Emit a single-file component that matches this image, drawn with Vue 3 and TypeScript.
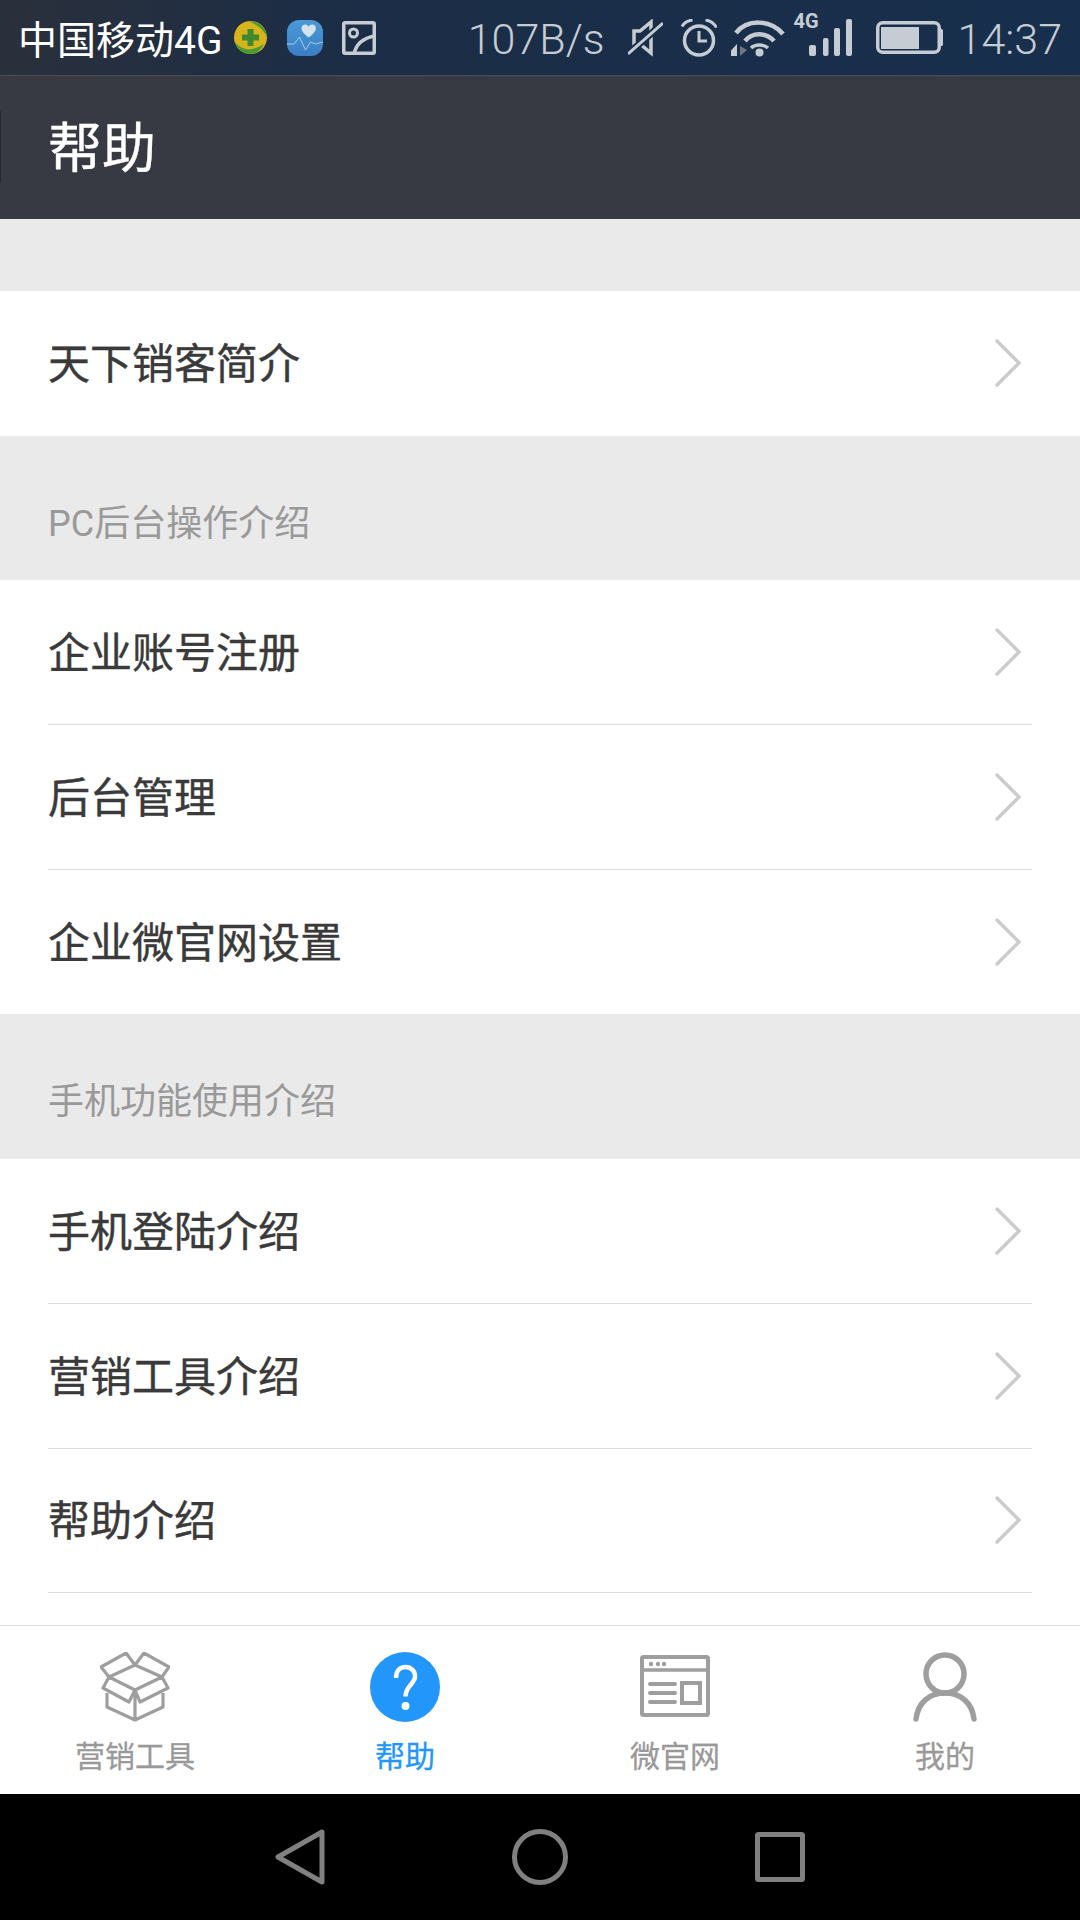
<script setup lang="ts">
interface Section {
  title: string
  items: string[]
  lastLine?: boolean
}

const sections: Section[] = [
  { title: '', items: ['天下销客简介'] },
  { title: 'PC后台操作介绍', items: ['企业账号注册', '后台管理', '企业微官网设置'] },
  { title: '手机功能使用介绍', items: ['手机登陆介绍', '营销工具介绍', '帮助介绍'], lastLine: true },
]
</script>

<template>
  <div class="page">
    <div class="status">
      <span class="carrier">中国移动4G</span>
      <svg class="ic-360" viewBox="0 0 33 33">
        <circle cx="16.500" cy="16.500" r="16.500" fill="#d8b41c" />
        <path d="M15 .5A16.500 16.500 0 0 1 33 17C31 10 24 4 15 .5z" fill="#4a9a34" />
        <path d="M.5 20C5 27 12 29 18 28c5-1 9-3 12-5-3 6-8 10-14 10C9 33 2.500 28 .5 20z" fill="#4a9a34" />
        <path d="M13.500 8h6v5.500H25v6h-5.500V25h-6v-5.500H8v-6h5.500z" fill="#3f8a2e" />
      </svg>
      <svg class="ic-heart" viewBox="0 0 36 36">
        <defs>
          <linearGradient id="hb" x1="0" y1="0" x2="0" y2="1">
            <stop offset="0" stop-color="#4a9ad6" />
            <stop offset="1" stop-color="#3a7ec6" />
          </linearGradient>
        </defs>
        <rect width="36" height="36" rx="12" fill="url(#hb)" />
        <path d="M21.700 17.500C16 13 14.500 10.500 14.500 8c0-2.300 1.800-3.500 3.500-3.500 1.600 0 3 .8 3.700 2.200.7-1.400 2.100-2.200 3.700-2.200 1.700 0 3.500 1.200 3.500 3.500 0 2.500-1.500 5-7.200 9.500z" fill="#d3e4ee" />
        <path d="M0 24h7l5.500-7 6 13 5-8 5 2 7.500-2" fill="none" stroke="#a4cdea" stroke-width="1" />
      </svg>
      <svg class="ic-pic" viewBox="0 0 34 34" fill="none" stroke="#c6ccd3" stroke-width="3.500">
        <rect x="1.750" y="1.750" width="30.500" height="30.500" rx="1.500" />
        <circle cx="11.500" cy="12" r="4" stroke-width="3" />
        <path d="M12 33c2-10 9-16 21-18" />
      </svg>

      <div class="status-right">
        <span class="speed">107B/s</span>
        <svg class="ic-mute" viewBox="0 0 35 38" fill="none">
          <path d="M6 12h6L23 3v31L12 25H6z" stroke="#c6ccd3" stroke-width="3.500" />
          <path d="M0 35L35 4" stroke="#182e4b" stroke-width="7" />
          <path d="M0 35L35 4" stroke="#c6ccd3" stroke-width="3" />
        </svg>
        <svg class="ic-alarm" viewBox="0 0 36 38" fill="none" stroke="#c6ccd3">
          <circle cx="18" cy="21.500" r="14.500" stroke-width="3.500" />
          <path d="M18 12v10h8" stroke-width="3" />
          <path d="M1 7.500C3 4 7 1.500 11.500 1M24.500 1C29 1.500 33 4.500 35.500 8.500" stroke-width="3" />
        </svg>
        <svg class="ic-wifi" viewBox="0 0 54 38" fill="none" stroke="#c6ccd3">
          <path d="M5 14C16 0 39 0 52 15" stroke-width="4.500" />
          <path d="M14 22C21 13 35 13 43 22" stroke-width="4.500" />
          <path d="M20 29c4-4 13-4 17 0" stroke-width="3.500" />
          <circle cx="28.500" cy="33.500" r="4" fill="#c6ccd3" stroke="none" />
          <path d="M0 31.500L6 25v12H0z" fill="#c6ccd3" stroke="none" />
          <path d="M9 27v10l7-6z" fill="#6d7784" stroke="none" />
        </svg>
        <div class="signal">
          <span class="net">4G</span>
          <svg class="ic-bars" viewBox="0 0 44 37" fill="#c6ccd3">
            <rect x="1" y="26" width="7" height="11" rx="2" />
            <rect x="15" y="19" width="5.500" height="18" rx="2" />
            <rect x="26" y="9" width="6" height="28" rx="2" />
            <rect x="38" y="0" width="6" height="37" rx="2" />
          </svg>
        </div>
        <svg class="ic-battery" viewBox="0 0 67 33" fill="none">
          <rect x="1.750" y="1.750" width="61.500" height="29.500" rx="5" stroke="#c6ccd3" stroke-width="3.500" />
          <rect x="5" y="6" width="38" height="22" fill="#c6ccd3" />
          <path d="M65 8h.5A1.500 1.500 0 0 1 67 9.500v14a1.500 1.500 0 0 1-1.500 1.500H65z" fill="#c6ccd3" />
        </svg>
        <span class="time">14:37</span>
      </div>
    </div>

    <header class="titlebar">
      <h1>帮助</h1>
    </header>

    <main class="content">
      <section v-for="(sec, i) in sections" :key="i">
        <div class="sec-title" :class="{ spacer: !sec.title }">{{ sec.title }}</div>
        <div class="list">
          <div
            v-for="(item, j) in sec.items"
            :key="item"
            class="row"
            :class="{ last: j === sec.items.length - 1 && !sec.lastLine }"
          >
            <span class="row-text">{{ item }}</span>
            <svg class="chevron" viewBox="0 0 26 48" fill="none">
              <path d="M2 2l22 22L2 46" stroke="#cccccc" stroke-width="3.500" stroke-linecap="round" />
            </svg>
          </div>
        </div>
      </section>
    </main>

    <nav class="tabs">
      <div class="tab">
        <svg class="tab-icon" viewBox="0 0 70 70" fill="none" stroke="#9e9e9e" stroke-width="3.200" stroke-linejoin="round">
          <path d="M1 15L26 1l9 12-26 12zM44 1l25 14-7 10-27-12zM35 13l27 12-27 13L9 25zM9 25L3 36l26 14 6-12zM62 25l6 11-28 14-5-12zM7 41v14l28 13 28-13V41M35 38v30" />
        </svg>
        <span>营销工具</span>
      </div>
      <div class="tab active">
        <svg class="tab-icon" viewBox="0 0 70 70" fill="none">
          <circle cx="35" cy="35" r="35" fill="#2396fb" />
          <path d="M26 26c0-7 4-11 9.500-11S45 19 45 24.500c0 7.500-9.500 9-9.500 20" stroke="#fff" stroke-width="4.500" />
          <circle cx="35.500" cy="54" r="4" fill="#fff" />
        </svg>
        <span>帮助</span>
      </div>
      <div class="tab">
        <svg class="tab-icon" viewBox="0 0 70 70" fill="none" stroke="#9e9e9e">
          <rect x="2" y="5" width="66" height="58" rx="1.500" stroke-width="4" />
          <path d="M2 18h66" stroke-width="3.500" />
          <circle cx="11" cy="12" r="2.200" fill="#9e9e9e" stroke="none" />
          <circle cx="18" cy="12" r="2.200" fill="#9e9e9e" stroke="none" />
          <circle cx="24" cy="12" r="2.200" fill="#9e9e9e" stroke="none" />
          <path d="M10 32h25M10 41h25M10 50h25" stroke-width="4" stroke-linecap="round" />
          <rect x="42" y="31" width="18" height="20" stroke-width="4" />
        </svg>
        <span>微官网</span>
      </div>
      <div class="tab">
        <svg class="tab-icon" viewBox="0 0 70 70" fill="none" stroke="#9e9e9e" stroke-width="5.500" stroke-linecap="round">
          <circle cx="35" cy="22" r="19" />
          <path d="M6 67C8 50 20 41 35 41s27 9 29 26" />
        </svg>
        <span>我的</span>
      </div>
    </nav>

    <div class="navbar">
      <div class="nav-item">
        <svg class="nav-back" viewBox="0 0 50 56" fill="none" stroke="#808080" stroke-width="5" stroke-linejoin="round">
          <path d="M3 28L47 3v50z" />
        </svg>
      </div>
      <div class="nav-item">
        <svg class="nav-home" viewBox="0 0 56 56" fill="none" stroke="#808080" stroke-width="5">
          <circle cx="28" cy="28" r="25.500" />
        </svg>
      </div>
      <div class="nav-item">
        <svg class="nav-recent" viewBox="0 0 50 50" fill="none" stroke="#808080" stroke-width="5" stroke-linejoin="round">
          <rect x="2.500" y="2.500" width="45" height="45" rx="1" />
        </svg>
      </div>
    </div>
  </div>
</template>

<style scoped>
.page {
  width: 1080px;
  height: 1920px;
  display: flex;
  flex-direction: column;
  overflow: hidden;
  background: #fff;
  font-family: Roboto, "Noto Sans CJK SC", sans-serif;
}

.status {
  height: 75px;
  flex-shrink: 0;
  display: flex;
  align-items: center;
  padding: 0 18px 0 18px;
  box-sizing: border-box;
  background: linear-gradient(90deg, #2a303b 0%, #1c2d46 30%, #172f4d 100%);
}

.carrier {
  font-size: 39px;
  color: #fff;
  white-space: nowrap;
  padding-bottom: 2px;
}

.ic-360 { width: 33px; height: 33px; margin-left: 12px; }
.ic-heart { width: 36px; height: 36px; margin-left: 20px; }
.ic-pic { width: 34px; height: 34px; margin-left: 19px; }

.status-right {
  margin-left: auto;
  display: flex;
  align-items: center;
  color: #c6ccd3;
}

.speed, .time {
  font-size: 43px;
  font-weight: 300;
  white-space: nowrap;
  padding-top: 2px;
}

.ic-mute { width: 35px; height: 38px; margin-left: 23px; }
.ic-alarm { width: 36px; height: 38px; margin-left: 18px; }
.ic-wifi { width: 54px; height: 38px; margin-left: 14px; }

.signal {
  position: relative;
  width: 44px;
  height: 37px;
  margin-left: 23px;
}

.net {
  position: absolute;
  left: -14px;
  top: -8px;
  font-size: 20px;
  font-weight: 700;
  line-height: 20px;
}

.ic-bars { display: block; width: 44px; height: 37px; }
.ic-battery { width: 67px; height: 33px; margin-left: 24px; }
.time { margin-left: 15px; }

.titlebar {
  position: relative;
  height: 144px;
  flex-shrink: 0;
  box-sizing: border-box;
  display: flex;
  align-items: center;
  padding: 0 0 7px 48px;
  background: #383a43;
  border-top: 1px solid #4c4e56;
}

.titlebar::before {
  content: "";
  position: absolute;
  left: 0;
  top: 35px;
  width: 1px;
  height: 71px;
  background: #26272c;
}

.titlebar h1 {
  margin: 0;
  font-size: 54px;
  font-weight: 400;
  color: #fff;
  -webkit-text-stroke: 0.4px #fff;
}

.content {
  flex: 1;
  background: #fff;
}

.sec-title {
  height: 144.7px;
  box-sizing: border-box;
  padding: 63px 0 0 48px;
  background: #eaeaea;
  color: #999;
  font-size: 36px;
  line-height: 50px;
}

.sec-title.spacer {
  height: 72px;
  padding: 0;
}

.row {
  height: 144.7px;
  box-sizing: border-box;
  margin-left: 48px;
  padding-right: 11px;
  margin-right: 48px;
  display: flex;
  align-items: center;
  justify-content: space-between;
  font-size: 42px;
  color: #3a3a3a;
  -webkit-text-stroke: 0.4px #3a3a3a;
  border-bottom: 1px solid #dcdcdc;
}

.row-text {
  padding-bottom: 5px;
}

.row.last {
  border-bottom: none;
}

.chevron {
  width: 26px;
  height: 48px;
}

.tabs {
  height: 169px;
  flex-shrink: 0;
  box-sizing: border-box;
  display: grid;
  grid-template-columns: repeat(4, 1fr);
  border-top: 1px solid #dcdcdc;
  background: #fff;
}

.tab {
  display: flex;
  flex-direction: column;
  align-items: center;
  padding-top: 26px;
  color: #999;
  font-size: 30px;
  line-height: 40px;
  -webkit-text-stroke: 0.3px currentColor;
}

.tab.active {
  color: #2396fb;
}

.tab-icon {
  width: 70px;
  height: 70px;
  margin-bottom: 15px;
}

.navbar {
  height: 126px;
  flex-shrink: 0;
  display: flex;
  justify-content: center;
  background: #000;
}

.nav-item {
  width: 240px;
  display: flex;
  align-items: center;
  justify-content: center;
}

.nav-back { width: 50px; height: 56px; }
.nav-home { width: 56px; height: 56px; }
.nav-recent { width: 50px; height: 50px; }
</style>
